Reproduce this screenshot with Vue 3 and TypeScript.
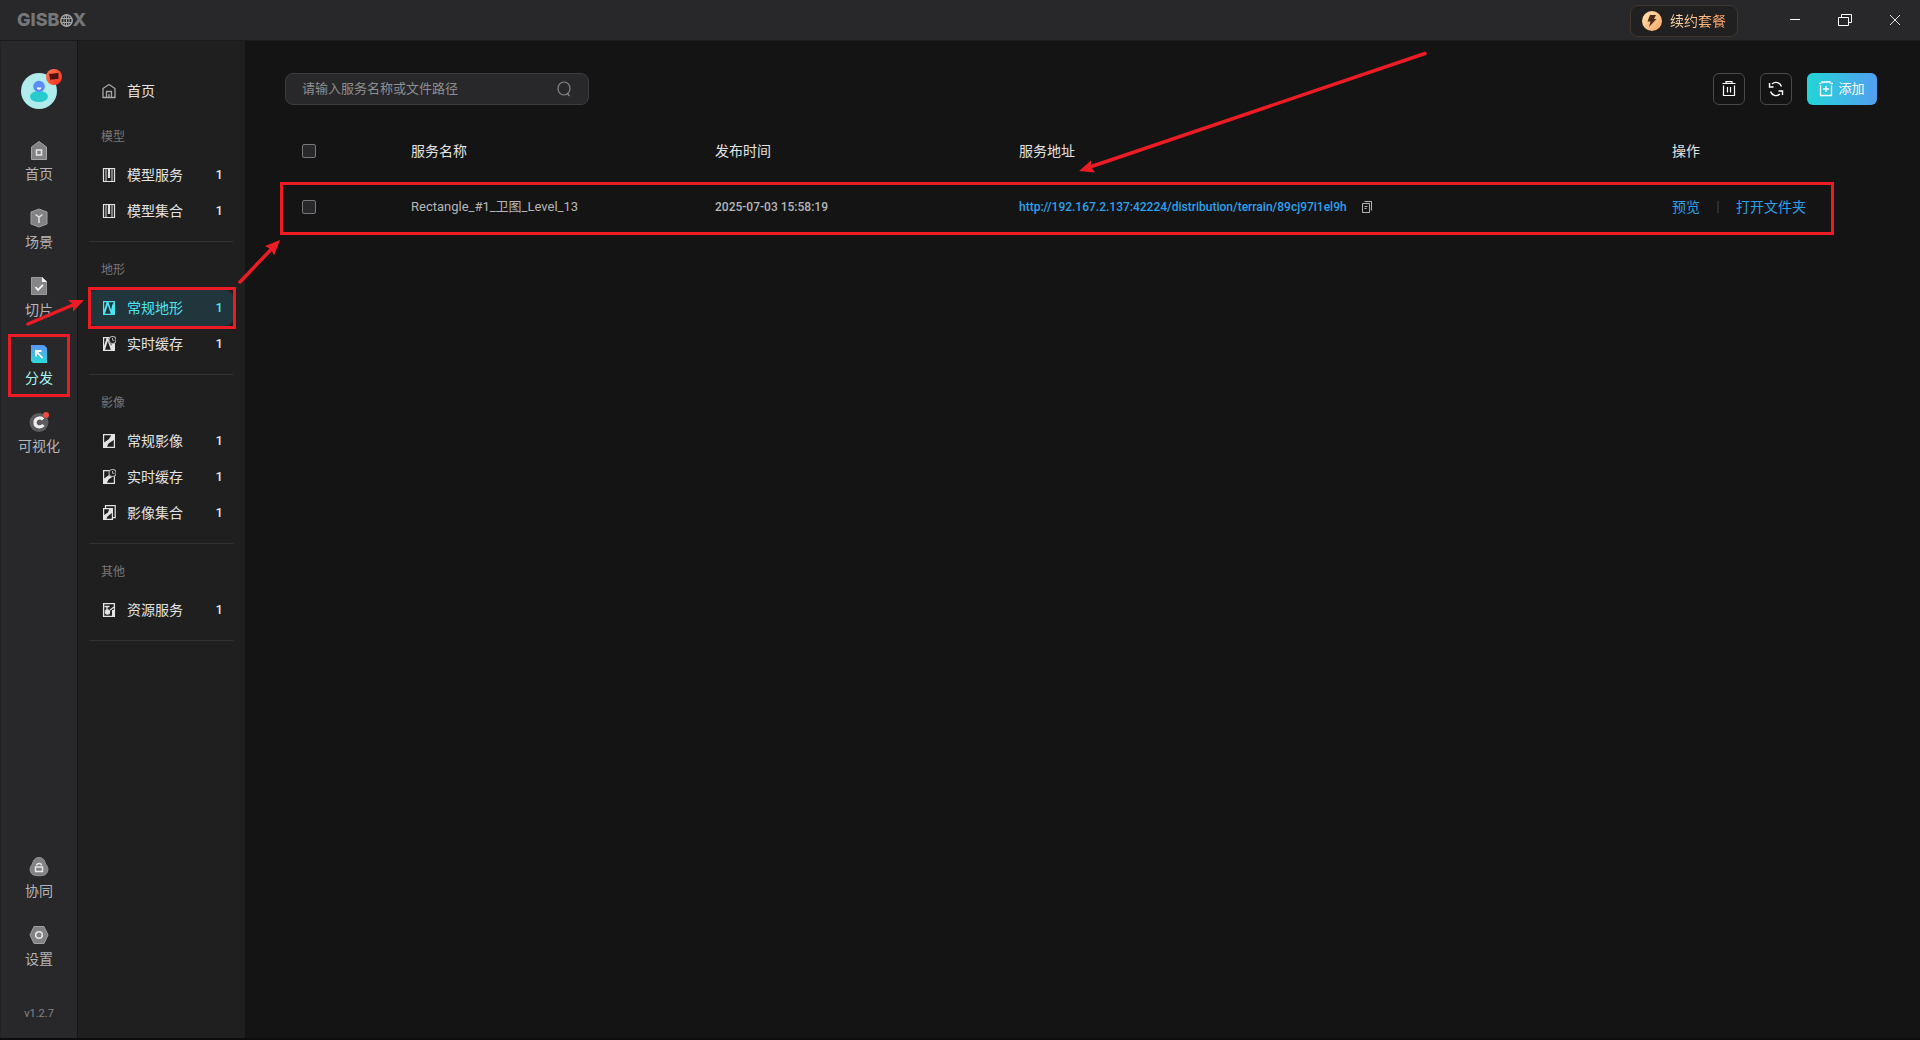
<script setup lang="ts">
import { ref } from 'vue'

interface NavItem {
  icon: string
  label: string
}

interface MenuItem {
  id: string
  icon: string
  label: string
  count: number
}

interface MenuGroup {
  title: string
  items: MenuItem[]
}

interface Service {
  name: string
  time: string
  url: string
  checked: boolean
}

const mainNav: NavItem[] = [
  { icon: 'home', label: '首页' },
  { icon: 'scene', label: '场景' },
  { icon: 'tile', label: '切片' },
  { icon: 'publish', label: '分发' },
  { icon: 'visual', label: '可视化' },
]

const footNav: NavItem[] = [
  { icon: 'team', label: '协同' },
  { icon: 'settings', label: '设置' },
]

const groups: MenuGroup[] = [
  {
    title: '模型',
    items: [
      { id: 'model', icon: 'model', label: '模型服务', count: 1 },
      { id: 'model-set', icon: 'model', label: '模型集合', count: 1 },
    ],
  },
  {
    title: '地形',
    items: [
      { id: 'terrain', icon: 'terrain', label: '常规地形', count: 1 },
      { id: 'terrain-cache', icon: 'terrain-clock', label: '实时缓存', count: 1 },
    ],
  },
  {
    title: '影像',
    items: [
      { id: 'image', icon: 'image', label: '常规影像', count: 1 },
      { id: 'image-cache', icon: 'image-clock', label: '实时缓存', count: 1 },
      { id: 'image-set', icon: 'image-set', label: '影像集合', count: 1 },
    ],
  },
  {
    title: '其他',
    items: [{ id: 'resource', icon: 'resource', label: '资源服务', count: 1 }],
  },
]

const activeNav = ref('分发')
const activeMenu = ref('terrain')
const keyword = ref('')
const allChecked = ref(false)
const services = ref<Service[]>([
  {
    name: 'Rectangle_#1_卫图_Level_13',
    time: '2025-07-03 15:58:19',
    url: 'http://192.167.2.137:42224/distribution/terrain/89cj97i1el9h',
    checked: false,
  },
])

function toggleAll() {
  services.value.forEach((s) => (s.checked = allChecked.value))
}
</script>

<template>
  <div class="app">
    <header class="titlebar">
      <div class="logo" aria-label="GISBOX">
        <span>GISB</span>
        <svg width="13" height="13" viewBox="0 0 13 13" fill="none" stroke="#a6a6a6">
          <circle cx="6.5" cy="6.5" r="5.7" stroke-width="1.5" />
          <ellipse cx="6.5" cy="6.5" rx="2.6" ry="5.7" />
          <path d="M6.5 1v11M1 4.5h11M1 8.5h11" />
        </svg>
        <span>X</span>
      </div>
      <div class="title-actions">
        <button class="renew" type="button">
          <svg width="20" height="20" viewBox="0 0 20 20">
            <defs>
              <linearGradient id="coin" x1="0" y1="0" x2="1" y2="1">
                <stop offset="0" stop-color="#ffe3b3" />
                <stop offset="1" stop-color="#ffa666" />
              </linearGradient>
            </defs>
            <circle cx="10" cy="10" r="10" fill="url(#coin)" />
            <path d="M8 4h6l-2 4h2.5L7 16l1.5-5.500H5.500z" fill="#4a2c16" />
          </svg>
          <span>续约套餐</span>
        </button>
        <button class="win" type="button" aria-label="最小化">
          <svg width="14" height="14" viewBox="0 0 14 14" stroke="#fff"><path d="M2 6.500h10" /></svg>
        </button>
        <button class="win" type="button" aria-label="还原">
          <svg width="14" height="14" viewBox="0 0 14 14" fill="none" stroke="#fff">
            <path d="M.5 4.500h10v8H.5zM3.500 4.500v-3h10v8h-3" />
          </svg>
        </button>
        <button class="win" type="button" aria-label="关闭">
          <svg width="14" height="14" viewBox="0 0 14 14" stroke="#e4e4e4"><path d="M2 2l10 10M12 2L2 12" /></svg>
        </button>
      </div>
    </header>

    <div class="body">
      <nav class="rail">
        <div class="avatar">
          <svg width="36" height="36" viewBox="0 0 36 36">
            <circle cx="18" cy="18" r="18" fill="#b0ecec" />
            <ellipse cx="18" cy="23.500" rx="9" ry="5.500" fill="#26cbcb" />
            <circle cx="18" cy="13.500" r="5.800" fill="#5b8cf5" />
            <path d="M15.800 14.500h4.400c0 3-4.400 3-4.400 0z" fill="#fff" />
          </svg>
          <svg class="badge" width="16" height="16" viewBox="0 0 16 16">
            <defs>
              <linearGradient id="flag" x1="0" y1="0" x2="1" y2="1">
                <stop offset="0" stop-color="#ff7a4d" />
                <stop offset="1" stop-color="#ff2a1c" />
              </linearGradient>
            </defs>
            <circle cx="8" cy="8" r="8" fill="url(#flag)" />
            <path d="M3 4.500c3 1 6-1 9.500-.5v6c-3-.5-5 1-7.500.5l-.5 1.500z" fill="#4d130c" />
          </svg>
        </div>

        <template v-for="(list, n) in [mainNav, footNav]" :key="n">
          <div v-if="n === 1" class="rail-space"></div>
          <button
            v-for="item in list"
            :key="item.label"
            type="button"
            class="rail-item"
            :class="{ active: activeNav === item.label }"
            @click="activeNav = item.label"
          >
            <svg width="20" height="20" viewBox="0 0 20 20">
              <g v-if="item.icon === 'home'">
                <path d="M2.500 7L10 1.500 17.500 7v12.500h-15z" fill="#828284" stroke="#a5a5a7" />
                <path d="M7.500 10h5v5h-5z" fill="none" stroke="#e6e6e6" stroke-width="1.500" />
              </g>
              <g v-else-if="item.icon === 'scene'">
                <path d="M10 1l8 3v12l-8 3-8-3V4z" fill="#828284" stroke="#a0a0a2" />
                <path d="M6.500 6.500L10 9l3.500-2.500M10 9v6" fill="none" stroke="#e0e0e0" stroke-width="1.500" />
              </g>
              <g v-else-if="item.icon === 'tile'">
                <path d="M2.500 1.500H13l4.500 4v13h-15z" fill="#858587" stroke="#9b9b9d" />
                <path d="M13 1l5 5h-5z" fill="#f2f2f2" />
                <path d="M6.500 11l2.500 3 5-5" fill="none" stroke="#f2f2f2" stroke-width="1.800" />
              </g>
              <g v-else-if="item.icon === 'publish'">
                <defs>
                  <linearGradient id="pub" x1="0" y1="0" x2="0" y2="1">
                    <stop offset="0" stop-color="#5a93f5" />
                    <stop offset="1" stop-color="#2bdcdc" />
                  </linearGradient>
                </defs>
                <path d="M2 1h13l3 3v15H4l-2-2z" fill="url(#pub)" />
                <path d="M7 12.500V7h5.500M7 7l6.500 7" fill="none" stroke="#fff" stroke-width="1.800" />
              </g>
              <g v-else-if="item.icon === 'visual'">
                <circle cx="10" cy="10.500" r="9.500" fill="#5c5c5e" />
                <path d="M14 7.500c-2-2.500-8-2-8 3s6 5.500 8.500 2.500" fill="none" stroke="#f0f0f0" stroke-width="3.200" />
                <circle cx="17" cy="3" r="3" fill="#f04a42" />
              </g>
              <g v-else-if="item.icon === 'team'">
                <path
                  d="M10 .5c4 0 6 3 6.500 6.500 3 3 3 7 1 9.500-1.500 3-13.500 3-15 0-2-2.500-2-6.500 1-9.500C4 3.500 6 .5 10 .5z"
                  fill="#828284" stroke="#98989a"
                />
                <path d="M6.500 10h7v4.500h-7z M7.500 8.500c.5-3 5-2.500 5 0" fill="none" stroke="#e6e6e6" stroke-width="1.500" />
              </g>
              <g v-else>
                <path d="M5 1.500h10l4 8.500-4 8.500H5L1 10z" fill="#828284" stroke="#a0a0a2" />
                <circle cx="10" cy="10" r="3.300" fill="none" stroke="#e6e6e6" stroke-width="1.600" />
              </g>
            </svg>
            <span>{{ item.label }}</span>
          </button>
        </template>
        <span class="version">v1.2.7</span>
      </nav>

      <aside class="sidebar">
        <button type="button" class="menu-item">
          <svg width="14" height="16" viewBox="0 0 14 16" fill="none" stroke="#a6a6aa" stroke-width="1.300">
            <path d="M1 5.500L7 1.500l6 4v9H1zM4.500 14V8.500h5V14M7 11v3.500" />
          </svg>
          <span>首页</span>
        </button>
        <section v-for="g in groups" :key="g.title" class="group">
          <h2>{{ g.title }}</h2>
          <button
            v-for="m in g.items"
            :key="m.id"
            type="button"
            class="menu-item"
            :class="{ active: activeMenu === m.id }"
            @click="activeMenu = m.id"
          >
            <svg width="14" height="16" viewBox="0 0 14 16">
              <g v-if="m.icon === 'model'" fill="none" stroke="currentColor">
                <path d="M1.500 1.500h11v13h-11z" stroke-width="1.200" />
                <path d="M4 2v12M10 2v12" stroke-width="1.800" opacity=".55" />
                <path d="M7 2v9" stroke-width="2.200" />
              </g>
              <g v-else-if="m.icon === 'terrain' || m.icon === 'terrain-clock'">
                <path d="M1 1h12v14H1z" fill="currentColor" />
                <path d="M2.200 2.200h2.300L2.200 10zM3 13.800L5.800 5l3 8.800zM6.500 2.200h5.300L10 5.500l-.8 4.500z" class="cut" />
              </g>
              <g v-else-if="m.icon === 'resource'">
                <path d="M1.600 1.600h10.800v12.800H1.600z" fill="none" stroke="currentColor" stroke-width="1.300" />
                <path d="M2.500 4.500h5M5 4.500v4M12 5L8 8" fill="none" stroke="currentColor" stroke-width="1.300" />
                <circle cx="5.500" cy="10" r="2.700" fill="currentColor" />
                <path d="M10 8h2v6h-2z" fill="currentColor" />
              </g>
              <g v-else-if="m.icon === 'image-set'">
                <path d="M3.500 3V.7h9.700v12H11" fill="none" stroke="currentColor" stroke-width="1.200" />
                <path d="M1 3h10v12H1z" fill="currentColor" />
                <path d="M2.200 4.200h5L6 7.500 2.200 10zM9.800 8v5.800H4.500l1-2.300z" class="cut" />
              </g>
              <g v-else>
                <path d="M1 1h12v14H1z" fill="currentColor" />
                <path d="M2.200 2.200h7L7 6 2.200 9.500zM11.800 7v6.800H5l1.500-3.300z" class="cut" />
              </g>
              <g v-if="m.icon.endsWith('clock')">
                <circle cx="10.500" cy="4" r="3.500" fill="#1f1f1f" stroke="#a8a8a8" stroke-width="1.200" />
                <path d="M10.500 2v2.300h2" fill="none" stroke="#a8a8a8" />
              </g>
            </svg>
            <span>{{ m.label }}</span>
            <b>{{ m.count }}</b>
          </button>
        </section>
      </aside>

      <main class="content">
        <div class="toolbar">
          <div class="search">
            <input v-model="keyword" type="text" aria-label="搜索" placeholder="请输入服务名称或文件路径" />
            <svg width="16" height="16" viewBox="0 0 16 16" fill="none" stroke="#87878a" stroke-width="1.200">
              <ellipse cx="8" cy="7.500" rx="6" ry="6.500" />
              <path d="M11 12l2.500 3" />
            </svg>
          </div>
          <div class="tools">
            <button type="button" class="square" aria-label="删除">
              <svg width="16" height="16" viewBox="0 0 16 16" fill="none" stroke="#fff" stroke-width="1.200">
                <path d="M1.500 2.500h13M5 2V.7h6V2M2.500 4.500v10h11v-10" />
                <path d="M6.500 6v5.500M9.500 6v5.500" />
              </svg>
            </button>
            <button type="button" class="square" aria-label="刷新">
              <svg width="16" height="16" viewBox="0 0 16 16" fill="none" stroke="#fff" stroke-width="1.400">
                <path d="M4 3c3.500-3 8-1.500 9.500 2.500M1.500 2v4h4M12 13c-3.500 3-8 1.500-9.500-2.500M14.500 14v-4h-4" />
              </svg>
            </button>
            <button type="button" class="add">
              <svg width="14" height="16" viewBox="0 0 14 16" fill="none" stroke="#fff" stroke-width="1.300">
                <path d="M0 2.500h2M12 2.500h2M3 2.500V1h8v1.500M1.500 4.500v10h11v-10M7 5v6M4 8h6" />
              </svg>
              <span>添加</span>
            </button>
          </div>
        </div>

        <table>
          <colgroup>
            <col class="c-check" />
            <col class="c-mid" />
            <col class="c-mid" />
            <col />
            <col class="c-ops" />
          </colgroup>
          <thead>
            <tr>
              <th><input v-model="allChecked" type="checkbox" aria-label="全选" @change="toggleAll" /></th>
              <th>服务名称</th>
              <th>发布时间</th>
              <th>服务地址</th>
              <th>操作</th>
            </tr>
          </thead>
          <tbody>
            <tr v-for="s in services" :key="s.url">
              <td><input v-model="s.checked" type="checkbox" :aria-label="s.name" /></td>
              <td>{{ s.name }}</td>
              <td class="compact">{{ s.time }}</td>
              <td class="compact">
                <div class="address">
                  <a :href="s.url">{{ s.url }}</a>
                  <button type="button" class="copy" aria-label="复制">
                    <svg width="12" height="14" viewBox="0 0 12 14" fill="none" stroke="#b4b4b4">
                      <path d="M1.500 3.500h7v9h-7zM3.500 1.500h7v9" />
                      <path d="M3.500 6.500h3M3.500 8.500h2" />
                    </svg>
                  </button>
                </div>
              </td>
              <td>
                <div class="ops">
                  <a href="#preview">预览</a>
                  <i></i>
                  <a href="#folder">打开文件夹</a>
                </div>
              </td>
            </tr>
          </tbody>
        </table>
      </main>
    </div>

    <!-- guide marks: publish > terrain > service row -->
    <svg class="guide" width="1840" height="400" viewBox="0 0 1840 400" aria-hidden="true">
      <g fill="none" stroke="#ed1c24" stroke-width="3">
        <path d="M9.500 335.500h59v60h-59z" />
        <path d="M89.500 288.500h145v39h-145z" />
        <path d="M281.500 183.500h1551v50h-1551z" />
      </g>
      <g stroke="#ed1c24" stroke-width="3.500" stroke-linecap="round">
        <path d="M28 324L74 304.500M240 282L271 249.500M1425 53.500L1090 167" />
      </g>
      <path
        d="M84 300L68 300 73 304.500 73 311.500zM280 240L265 246 271 249.500 274 255.500zM1079 171L1091 160.500 1091 167 1095 172.500z"
        fill="#ed1c24"
      />
    </svg>
  </div>
</template>

<style>
body {
  background: #141414;
}
</style>

<style scoped>
.app {
  position: relative;
  display: flex;
  flex-direction: column;
  box-sizing: border-box;
  min-height: 100vh;
  border-bottom: 2px solid #0c0c0c;
  background: #141414;
  color: #e4e4e4;
  font-family: Roboto, "Noto Sans CJK SC", sans-serif;
  font-size: 14px;
  line-height: 20px;
}
button {
  padding: 0;
  border: 0;
  background: none;
  color: inherit;
  font: inherit;
  cursor: pointer;
}
svg {
  display: block;
  flex: none;
}
.titlebar {
  display: flex;
  align-items: center;
  justify-content: space-between;
  height: 40px;
  padding: 0 0 0 17px;
  border-bottom: 1px solid #1b1b1c;
  background: #28282a;
}
.logo {
  display: flex;
  align-items: center;
  color: #767678;
  font-family: Inter, sans-serif;
  font-size: 18px;
  font-weight: 800;
}
.title-actions {
  display: flex;
  align-items: center;
}
.renew {
  display: flex;
  align-items: center;
  gap: 8px;
  box-sizing: border-box;
  height: 32px;
  margin: 2px 32px 0 0;
  padding: 0 11px;
  border: 1px solid #403630;
  border-radius: 8px;
  background: #202021;
}
.renew span {
  background: linear-gradient(90deg, #ffe0b2, #ff9f62);
  background-clip: text;
  color: transparent;
}
.win {
  display: flex;
  align-items: center;
  justify-content: center;
  width: 50px;
  height: 40px;
}
.body {
  display: flex;
  flex: 1;
}
.rail {
  display: flex;
  flex-direction: column;
  align-items: center;
  width: 77px;
  padding: 32px 0 14px;
  box-sizing: border-box;
  border-left: 1px solid #222224;
  background: #28282a;
  color: #b4b4b6;
}
.avatar {
  position: relative;
  margin-bottom: 31px;
}
.badge {
  position: absolute;
  top: -4px;
  right: -5px;
}
.rail-item {
  display: flex;
  flex-direction: column;
  align-items: center;
  gap: 4px;
  width: 60px;
  height: 44px;
  margin-bottom: 24px;
}
.rail-item.active {
  color: #a5f5f0;
}
.rail-space {
  flex: 1;
}
.version {
  margin-top: 11px;
  color: #848486;
  font-size: 11px;
}
.sidebar {
  width: 144px;
  padding: 32px 12px 32px 11px;
  border-left: 1px solid #161616;
  background: #1f1f1f;
}
.menu-item {
  display: flex;
  align-items: center;
  gap: 11px;
  box-sizing: border-box;
  width: 100%;
  height: 36px;
  padding: 0 10px 0 13px;
  border-radius: 8px;
}
.menu-item b {
  margin-left: auto;
  font-size: 13px;
  font-weight: 500;
}
.menu-item.active {
  background: #20363c;
  color: #4fe3f2;
}
.cut {
  fill: #1f1f1f;
}
.active .cut {
  fill: #20363c;
}
.group {
  padding: 18px 0 12px;
  border-bottom: 1px solid #333;
}
.group h2 {
  margin: 0 0 10px 12px;
  color: #77777a;
  font-size: 12px;
  font-weight: 400;
  line-height: 20px;
}
.content {
  flex: 1;
  min-width: 0;
  padding: 32px 43px 0 40px;
}
.toolbar {
  display: flex;
  justify-content: space-between;
  margin-bottom: 18px;
}
.search {
  display: flex;
  align-items: center;
  box-sizing: border-box;
  width: 304px;
  height: 32px;
  padding: 0 16px;
  border: 1px solid #3c3c3e;
  border-radius: 8px;
  background: #28282a;
}
.search input {
  flex: 1;
  min-width: 0;
  padding: 0;
  border: 0;
  outline: 0;
  background: none;
  color: #e4e4e4;
  font: inherit;
  font-size: 13px;
}
.search input::placeholder {
  color: #8e8e90;
}
.tools {
  display: flex;
  gap: 15px;
}
.square {
  display: flex;
  align-items: center;
  justify-content: center;
  box-sizing: border-box;
  width: 32px;
  height: 32px;
  border: 1px solid #4a4a4c;
  border-radius: 6px;
}
.add {
  display: flex;
  align-items: center;
  justify-content: center;
  gap: 5px;
  width: 70px;
  height: 32px;
  border-radius: 6px;
  background: linear-gradient(90deg, #22d5d8, #539ff0);
  color: #fff;
  font-size: 13px;
}
table {
  width: 100%;
  border-collapse: collapse;
  table-layout: fixed;
}
.c-check {
  width: 110px;
}
.c-mid {
  width: 304px;
}
.c-ops {
  width: 221px;
}
th,
td {
  height: 56px;
  padding: 0 16px;
  text-align: left;
  white-space: nowrap;
}
th:first-child,
td:first-child {
  padding-left: 17px;
}
th {
  font-weight: 400;
}
td {
  color: #b6b6b8;
  font-size: 13px;
}
.compact {
  font-size: 12px;
  font-weight: 500;
}
input[type="checkbox"] {
  display: block;
  box-sizing: border-box;
  width: 14px;
  height: 14px;
  margin: 0;
  appearance: none;
  border: 1px solid #77777a;
  border-radius: 2px;
  background: #28282a;
}
input[type="checkbox"]:checked {
  background: #22d5d8;
}
a {
  color: #2ba1ec;
  text-decoration: none;
}
.address,
.ops {
  display: flex;
  align-items: center;
}
.address {
  gap: 14px;
}
.ops {
  gap: 17px;
  font-size: 14px;
}
.ops i {
  width: 2px;
  height: 12px;
  background: #2c2c2e;
}
.guide {
  position: absolute;
  top: 0;
  left: 0;
  pointer-events: none;
}
</style>
